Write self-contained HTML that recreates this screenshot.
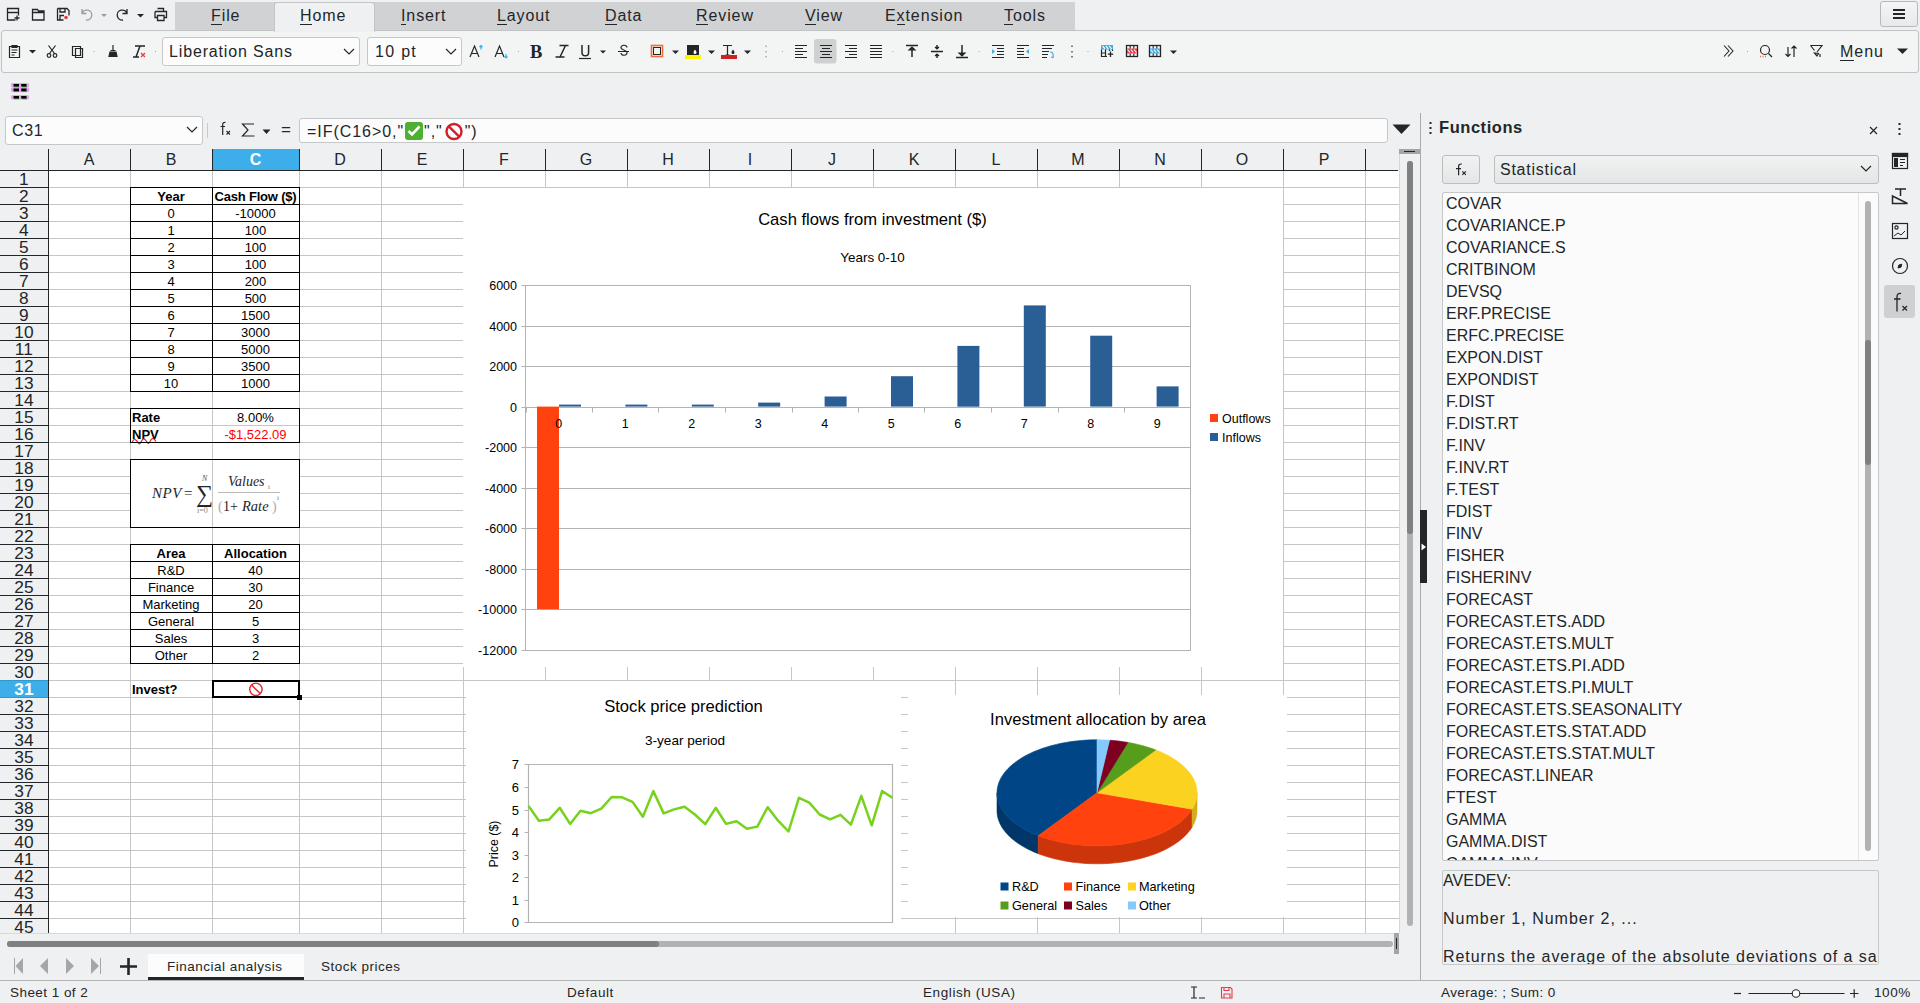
<!DOCTYPE html>
<html><head><meta charset="utf-8">
<style>
*{box-sizing:border-box}
html,body{margin:0;padding:0}
body{width:1920px;height:1003px;position:relative;overflow:hidden;background:#eff0f1;font-family:"Liberation Sans",sans-serif;color:#232629}
.a{position:absolute}
.ui{font-family:"Liberation Sans",sans-serif;font-size:16px;letter-spacing:0.6px;white-space:nowrap;line-height:1}
.ic{position:absolute;overflow:visible}
.tab{position:absolute;top:7.6px;font-size:16px;letter-spacing:0.9px;white-space:nowrap;line-height:1;color:#232629}
.tab u{text-decoration:none;border-bottom:1.5px solid #232629}
.rh{position:absolute;left:0;width:48px;height:17px;text-align:center;font-size:17.3px;letter-spacing:0.2px;line-height:17px;color:#232629}
.ch{position:absolute;top:149px;height:21px;text-align:center;font-size:16px;line-height:21px;color:#232629}
.c{position:absolute;height:17px;font-size:13px;line-height:1;white-space:nowrap;color:#000}
.fl{position:absolute;left:1445px;font-size:16px;letter-spacing:0.75px;white-space:nowrap;line-height:1;color:#232629}
</style></head><body>
<!-- quick access icons -->
<svg class="ic" style="left:0;top:0" width="175" height="30" viewBox="0 0 175 30" fill="none" stroke="#232629" stroke-width="1.3">
 <path d="M7.5 8.5h11v4h-11z M7.5 12.5v7.5h8 M18.5 12.5v3 M17 15.5v5 M14.5 18h5"/>
 <path d="M32.5 9.5h5l1 1.5h5.5v9h-11.5z M32.5 12.5h11.5"/>
 <path d="M57.5 8.5h9.5l2 2v5 M57.5 8.5v11.5h6 M60 8.5v3.5h5v-3.5 M60 19.5v-4h4"/>
 <circle cx="66" cy="17.5" r="1.8" fill="#e93a4a" stroke="none"/>
 <path d="M82 13.5a5 5 0 1 1 4 6.5 M82 9v4.5h4.5" stroke="#9a9a9a"/>
 <path d="M101 14l3 3 3-3z" fill="#9a9a9a" stroke="none"/>
 <path d="M127 13.5a5 5 0 1 0 -4 6.5 M127 9v4.5h-4.5"/>
 <path d="M137 14l3.5 3.5 3.5-3.5z" fill="#232629" stroke="none"/>
 <path d="M157.5 8.5h6v3 M155 11.5h11.5v6h-2 M155 11.5v6h2 M157.5 15.5h6.5v5h-6.5z"/>
</svg>
<!-- tabs band -->
<div class="a" style="left:175px;top:2px;width:900px;height:28px;background:#d1d2d4"></div>
<!-- toolbar box -->
<div class="a" style="left:1px;top:30px;width:1918px;height:43px;background:#f3f4f4;border:1px solid #c2c3c4;border-radius:3px"></div>
<div class="a" style="left:274px;top:2px;width:101px;height:30px;background:#eff0f1;border:1px solid #c4c5c6;border-bottom:none;border-radius:3px 3px 0 0"></div>
<div class="tab" style="left:211px"><u>F</u>ile</div>
<div class="tab" style="left:300px"><u>H</u>ome</div>
<div class="tab" style="left:401px"><u>I</u>nsert</div>
<div class="tab" style="left:497px"><u>L</u>ayout</div>
<div class="tab" style="left:605px"><u>D</u>ata</div>
<div class="tab" style="left:696px"><u>R</u>eview</div>
<div class="tab" style="left:805px"><u>V</u>iew</div>
<div class="tab" style="left:885px">E<u>x</u>tension</div>
<div class="tab" style="left:1004px"><u>T</u>ools</div>
<!-- hamburger -->
<div class="a" style="left:1880px;top:1px;width:38px;height:26px;border:1px solid #b8b9ba;border-radius:3px;background:linear-gradient(#f4f5f5,#e8e9ea)"></div>
<svg class="ic" style="left:1892px;top:8px" width="14" height="12"><path d="M1 2h12M1 6h12M1 10h12" stroke="#232629" stroke-width="1.8"/></svg>
<svg class="ic" style="left:0;top:30px" width="1920" height="42" viewBox="0 30 1920 42" fill="none" stroke="#232629" stroke-width="1.2">
 <!-- paste -->
 <path d="M9.5 46.5h10v11h-10z M12 45.5h5v2h-5z M11.5 50h6 M11.5 52.5h5 M11.5 55h3"/>
 <path d="M29 50l3.5 3.5 3.5-3.5z" fill="#232629" stroke="none"/>
 <!-- cut -->
 <path d="M48.5 45.5l6 8 M55.5 45.5l-6 8"/><circle cx="49" cy="55.5" r="1.8"/><circle cx="55" cy="55.5" r="1.8"/>
 <!-- copy -->
 <path d="M72.5 46.5h8v9h-8z M75.5 48.5h7v9h-7z" fill="#f3f4f4"/>
 <circle cx="94" cy="51.5" r="0.6" fill="#999" stroke="none"/>
 <!-- clone brush -->
 <path d="M113 45v5 M110.5 50.5h5 M110 52h6l1 4.5h-8z" fill="#232629"/>
 <!-- clear formatting -->
 <path d="M135 46h10 M140 46l-4 11 M133 57h6" stroke-width="1.5"/>
 <path d="M141 53l4 4 M145 53l-4 4" stroke="#e93a4a" stroke-width="1.3"/>
 <circle cx="155.5" cy="51.5" r="0.6" fill="#999" stroke="none"/>
 <!-- increase/decrease font -->
 <path d="M470 57l4.5-11 4.5 11 M472 53.5h5"/><path d="M481 45.5v4 M479.5 47l1.5-1.5 1.5 1.5" stroke="#3daee9"/>
 <path d="M495 57l4.5-11 4.5 11 M497 53.5h5"/><path d="M506 54v4 M504.5 56.5l1.5 1.5 1.5-1.5" stroke="#3daee9"/>
 <circle cx="518.5" cy="51.5" r="0.6" fill="#999" stroke="none"/>
 <!-- B I U S -->
 <text x="530" y="57.5" font-family="Liberation Serif" font-weight="bold" font-size="18.5" fill="#232629" stroke="none">B</text>
 <path d="M559.5 45.5h9 M555.5 57h9 M565.5 45.5l-5.5 11.5" stroke-width="1.5"/>
 <path d="M582 45v7.5a3.3 3.3 0 0 0 6.6 0v-7.5" stroke-width="1.5"/><path d="M579 58.5h12" stroke-width="1.2"/>
 <path d="M600 50.5l3 3 3-3z" fill="#232629" stroke="none"/>
 <path d="M618 51.5h11 M627 47.5a3 2.5 0 0 0 -6 0.5c0 2 6 2 6 4.5a3 2.5 0 0 1 -6 0.5"/>
 <!-- border -->
 <rect x="651.5" y="45.5" width="11" height="11" stroke="#f26b3a" stroke-width="1.6"/>
 <rect x="653.5" y="47.5" width="7" height="7" stroke="#232629" stroke-width="1"/>
 <path d="M672 50.5l3.5 3.5 3.5-3.5z" fill="#232629" stroke="none"/>
 <!-- bg color -->
 <rect x="687" y="45" width="12" height="10" fill="#232629" stroke="none"/>
 <path d="M695 49.5c-1 1.5-1.5 2.2-1.5 3a1.5 1.5 0 0 0 3 0c0-0.8-0.5-1.5-1.5-3z" fill="#fff" stroke="none"/>
 <rect x="685" y="55" width="16" height="4" fill="#fdf500" stroke="none"/>
 <path d="M708 50.5l3.5 3.5 3.5-3.5z" fill="#232629" stroke="none"/>
 <!-- font color -->
 <path d="M723 45.5h9 M727.5 45.5v9.5 M725.5 55h4"/>
 <path d="M733 49.5c-1 1.5-1.5 2.2-1.5 3a1.5 1.5 0 0 0 3 0c0-0.8-0.5-1.5-1.5-3z" fill="#232629" stroke="none"/>
 <rect x="721" y="55" width="16" height="4" fill="#d21f1f" stroke="none"/>
 <path d="M744 50.5l3.5 3.5 3.5-3.5z" fill="#232629" stroke="none"/>
 <path d="M766 45.5v1.5 M766 51v1.5 M766 56v1.5" stroke="#aaa" stroke-width="1.5"/>
 <circle cx="782.5" cy="51.5" r="0.6" fill="#999" stroke="none"/>
 <!-- align active bg -->
 <rect x="814" y="39" width="22.5" height="24.5" rx="3" fill="#cfd0d1" stroke="none"/>
 <path d="M795 45.5h12 M795 48.5h8 M795 51.5h12 M795 54.5h8 M795 57.5h12" stroke-width="1"/>
 <path d="M820 45.5h12 M822 48.5h8 M820 51.5h12 M822 54.5h8 M820 57.5h12" stroke-width="1"/>
 <path d="M845 45.5h12 M849 48.5h8 M845 51.5h12 M849 54.5h8 M845 57.5h12" stroke-width="1"/>
 <path d="M870 45.5h12 M870 48.5h12 M870 51.5h12 M870 54.5h12 M870 57.5h12" stroke-width="1"/>
 <circle cx="893" cy="51.5" r="0.6" fill="#999" stroke="none"/>
 <path d="M906 45.5h12 M912 48v9" stroke-width="1.5"/><path d="M909 50l3-3 3 3z" fill="#232629"/>
 <path d="M931 51.5h12 M937 45v4 M937 54v4" stroke-width="1.5"/><path d="M935 47l2 2 2-2 M935 56l2-2 2 2" fill="#232629"/>
 <path d="M956 57.5h12 M962 45v9" stroke-width="1.5"/><path d="M959 53l3 3 3-3z" fill="#232629"/>
 <circle cx="979" cy="51.5" r="0.6" fill="#999" stroke="none"/>
 <path d="M992 45.5h12 M997 48.5h7 M997 51.5h7 M997 54.5h7 M992 57.5h12" stroke-width="1"/><path d="M992 49l3 2.5-3 2.5z" fill="#3daee9" stroke="none"/>
 <path d="M1017 45.5h12 M1017 48.5h7 M1017 51.5h7 M1017 54.5h7 M1017 57.5h12" stroke-width="1"/><path d="M1029 49l-3 2.5 3 2.5z" fill="#3daee9" stroke="none"/>
 <path d="M1042 45.5h12 M1042 48.5h10 M1042 51.5h7 M1042 54.5h6 M1042 57.5h5" stroke-width="1"/><path d="M1050 52a3 3 0 0 1 3 4 M1051 57l2 0.5 0.5-2" stroke="#3daee9"/>
 <path d="M1072 45.5v1.5 M1072 51v1.5 M1072 56v1.5" stroke="#555" stroke-width="1.5"/>
 <circle cx="1088" cy="51.5" r="0.6" fill="#999" stroke="none"/>
 <!-- insert rows / delete rows / merge -->
 <rect x="1101" y="45" width="12" height="4.5" fill="#3daee9" stroke="none"/>
 <path d="M1102.5 45.8l2.5 3 M1105.8 45.8l2.5 3 M1109.1 45.8l2.5 3" stroke="#fff" stroke-width="1.1"/>
 <path d="M1101.5 49.5v7h5.5 M1101.5 53h4 M1105.5 49.5v7 M1109.5 49.5v1.5 M1112.5 49.5v1.5" stroke-width="1.2"/>
 <path d="M1107.8 54.2h5.4 M1110.5 51.5v5.4" stroke-width="1.3"/>
 <rect x="1126.5" y="45.5" width="11" height="11" stroke-width="1.3"/>
 <rect x="1127" y="48.5" width="10" height="5" fill="#e93a4a" stroke="none"/>
 <path d="M1127.5 49.5l2.5 3 M1130.8 49.5l2.5 3 M1134.1 49.5l2.5 3" stroke="#fff" stroke-width="1.1"/>
 <path d="M1130.2 45.5v3 M1133.8 45.5v3 M1130.2 53.5v3 M1133.8 53.5v3" stroke-width="1.1"/>
 <rect x="1149.5" y="45.5" width="11" height="11" stroke-width="1.3"/>
 <rect x="1150" y="48.5" width="10" height="5" fill="#3daee9" stroke="none"/>
 <path d="M1150.5 49.5l2.5 3 M1153.8 49.5l2.5 3 M1157.1 49.5l2.5 3" stroke="#fff" stroke-width="1.1"/>
 <path d="M1153.2 45.5v3 M1156.8 45.5v3 M1153.2 53.5v3 M1156.8 53.5v3" stroke-width="1.1"/>
 <path d="M1170 50.5l3.5 3.5 3.5-3.5z" fill="#232629" stroke="none"/>
 <!-- right side -->
 <path d="M1724 45.5l5 5.5-5 5.5 M1728 45.5l5 5.5-5 5.5" stroke-width="1.1"/>
 <circle cx="1747.5" cy="51.5" r="0.6" fill="#999" stroke="none"/>
 <circle cx="1765" cy="50" r="4.5"/><path d="M1768.5 53.5l3.5 3.5"/><path d="M1760 56.5h1 M1762.5 56.5h1 M1765 56.5h1" stroke="#f26b3a" stroke-width="1.3"/>
 <path d="M1788 47v9.5 M1785.5 54l2.5 2.5 2.5-2.5 M1794 57v-10.5 M1791.5 48.5l2.5-2.5 2.5 2.5"/>
 <path d="M1810.5 45.5h11.5l-5 6.5 M1810.5 45.5l4 5 M1814.5 53l2.5 3 1.5-2.5z M1820 54v3"/>
 <path d="M1897 48.5h11l-5.5 5.5z" fill="#232629" stroke="none"/>
</svg>
<!-- font name box -->
<div class="a" style="left:162px;top:37px;width:198px;height:29px;background:#fcfcfc;border:1px solid #c6c7c8;border-radius:3px"></div>
<div class="ui a" style="left:169px;top:44px;font-size:16px;letter-spacing:0.85px">Liberation Sans</div>
<svg class="ic" style="left:343px;top:48px" width="12" height="8"><path d="M1 1l5 5 5-5" fill="none" stroke="#232629" stroke-width="1.2"/></svg>
<div class="a" style="left:367px;top:37px;width:95px;height:29px;background:#fcfcfc;border:1px solid #c6c7c8;border-radius:3px"></div>
<div class="ui a" style="left:375px;top:44px;font-size:16px;letter-spacing:1.3px">10 pt</div>
<svg class="ic" style="left:445px;top:48px" width="12" height="8"><path d="M1 1l5 5 5-5" fill="none" stroke="#232629" stroke-width="1.2"/></svg>
<div class="ui a" style="left:1840px;top:44px;font-size:16px;letter-spacing:0.95px"><span style="border-bottom:1.5px solid #232629">M</span>enu</div>
<!-- sidebar toggle icon row -->
<svg class="ic" style="left:8px;top:78px" width="28" height="28" viewBox="8 78 28 28">
 <path d="M13 85.2h6.3 M21 85.2h6 M13 89.9h6.3 M21 89.9h6 M13 97.2h6.3 M21 97.2h6" stroke="#e7a0f0" stroke-width="4.6" stroke-linecap="round"/>
 <path d="M14 86.6h5 M22 86.6h5 M14 91.2h5 M22 91.2h5 M14 98.6h5 M22 98.6h5" stroke="#5cab5c" stroke-width="1.2"/>
 <path d="M13.5 85.2h5.5 M21.2 85.2h5.3 M13.5 89.9h5.5 M21.2 89.9h5.3 M13.5 97.2h5.5 M21.2 97.2h5.3" stroke="#000" stroke-width="2.6"/>
</svg>
<div class="a" style="left:5px;top:116px;width:198px;height:29px;background:#fcfcfc;border:1px solid #c6c7c8;border-radius:3px"></div>
<div class="ui a" style="left:12px;top:123px;letter-spacing:0.6px">C31</div>
<svg class="ic" style="left:186px;top:126px" width="12" height="8"><path d="M1 1l5 5 5-5" fill="none" stroke="#232629" stroke-width="1.2"/></svg>
<div class="a" style="left:207px;top:123px;width:1px;height:15px;background:#c8c9ca"></div>
<svg class="ic" style="left:218px;top:121px" width="16" height="16"><path d="M7.5 1.5c-1.8-0.3-2.8 0.4-2.8 2.2v10.3 M2.5 5.5h4.5" fill="none" stroke="#232629" stroke-width="1.2"/><path d="M8.5 10l3.5 3.5 M12 10l-3.5 3.5" stroke="#232629" stroke-width="1.1"/></svg>
<svg class="ic" style="left:241px;top:123px" width="15" height="14"><path d="M13 1H1.5l5.5 6-5.5 6H13.5" fill="none" stroke="#232629" stroke-width="1.2"/></svg>
<svg class="ic" style="left:262px;top:129px" width="9" height="6"><path d="M0.5 0.5h8l-4 4.5z" fill="#232629"/></svg>
<div class="a" style="left:281px;top:121px;font-size:17px;color:#232629;line-height:1">=</div>
<div class="a" style="left:299px;top:118px;width:1089px;height:25px;background:#fcfcfc;border:1px solid #c6c7c8;border-radius:3px"></div>
<div class="ui a" style="left:307px;top:122px;letter-spacing:0.95px">=IF(C16&gt;0,"<span style="display:inline-block;width:18px;height:18px;background:#4cb032;border-radius:3px;vertical-align:-3px;position:relative;margin:0 1px"><svg width="18" height="18" style="position:absolute;left:0;top:0"><path d="M3.5 9l3.5 3.5 7.5-8" fill="none" stroke="#fff" stroke-width="2.6"/></svg></span>","<svg width="20" height="19" style="vertical-align:-4px;margin:0 1px"><circle cx="10" cy="9.5" r="7.5" fill="none" stroke="#d0202a" stroke-width="2.4"/><path d="M4.8 4.3l10.4 10.4" stroke="#d0202a" stroke-width="2.4"/></svg>")</div>
<svg class="ic" style="left:1392px;top:124px" width="19" height="11"><path d="M0.5 0.5h18l-9 9.5z" fill="#232629"/></svg>

<div class="a" style="left:212px;top:149px;width:87px;height:21px;background:#3daee9"></div>
<div class="ch" style="left:48px;width:82px">A</div>
<div class="a" style="left:130px;top:149px;width:1px;height:21px;background:#232629"></div>
<div class="ch" style="left:130px;width:82px">B</div>
<div class="a" style="left:212px;top:149px;width:1px;height:21px;background:#232629"></div>
<div class="ch" style="left:212px;width:87px;color:#fff;font-weight:bold">C</div>
<div class="a" style="left:299px;top:149px;width:1px;height:21px;background:#232629"></div>
<div class="ch" style="left:299px;width:82px">D</div>
<div class="a" style="left:381px;top:149px;width:1px;height:21px;background:#232629"></div>
<div class="ch" style="left:381px;width:82px">E</div>
<div class="a" style="left:463px;top:149px;width:1px;height:21px;background:#232629"></div>
<div class="ch" style="left:463px;width:82px">F</div>
<div class="a" style="left:545px;top:149px;width:1px;height:21px;background:#232629"></div>
<div class="ch" style="left:545px;width:82px">G</div>
<div class="a" style="left:627px;top:149px;width:1px;height:21px;background:#232629"></div>
<div class="ch" style="left:627px;width:82px">H</div>
<div class="a" style="left:709px;top:149px;width:1px;height:21px;background:#232629"></div>
<div class="ch" style="left:709px;width:82px">I</div>
<div class="a" style="left:791px;top:149px;width:1px;height:21px;background:#232629"></div>
<div class="ch" style="left:791px;width:82px">J</div>
<div class="a" style="left:873px;top:149px;width:1px;height:21px;background:#232629"></div>
<div class="ch" style="left:873px;width:82px">K</div>
<div class="a" style="left:955px;top:149px;width:1px;height:21px;background:#232629"></div>
<div class="ch" style="left:955px;width:82px">L</div>
<div class="a" style="left:1037px;top:149px;width:1px;height:21px;background:#232629"></div>
<div class="ch" style="left:1037px;width:82px">M</div>
<div class="a" style="left:1119px;top:149px;width:1px;height:21px;background:#232629"></div>
<div class="ch" style="left:1119px;width:82px">N</div>
<div class="a" style="left:1201px;top:149px;width:1px;height:21px;background:#232629"></div>
<div class="ch" style="left:1201px;width:82px">O</div>
<div class="a" style="left:1283px;top:149px;width:1px;height:21px;background:#232629"></div>
<div class="ch" style="left:1283px;width:82px">P</div>
<div class="a" style="left:1365px;top:149px;width:1px;height:21px;background:#232629"></div>
<div class="a" style="left:48px;top:149px;width:1px;height:21px;background:#232629"></div>
<div class="a" style="left:0;top:170px;width:1398px;height:1px;background:#232629"></div>
<div class="a" style="left:49px;top:171px;width:1350px;height:762px;background:#fff"></div>
<div class="a" style="left:49px;top:171px;width:1350px;height:762px;background:repeating-linear-gradient(to bottom,transparent 0,transparent 16px,#c6c6c6 16px,#c6c6c6 17px)"></div>
<div class="a" style="left:130px;top:171px;width:1px;height:762px;background:#c6c6c6"></div>
<div class="a" style="left:212px;top:171px;width:1px;height:762px;background:#c6c6c6"></div>
<div class="a" style="left:299px;top:171px;width:1px;height:762px;background:#c6c6c6"></div>
<div class="a" style="left:381px;top:171px;width:1px;height:762px;background:#c6c6c6"></div>
<div class="a" style="left:463px;top:171px;width:1px;height:762px;background:#c6c6c6"></div>
<div class="a" style="left:545px;top:171px;width:1px;height:762px;background:#c6c6c6"></div>
<div class="a" style="left:627px;top:171px;width:1px;height:762px;background:#c6c6c6"></div>
<div class="a" style="left:709px;top:171px;width:1px;height:762px;background:#c6c6c6"></div>
<div class="a" style="left:791px;top:171px;width:1px;height:762px;background:#c6c6c6"></div>
<div class="a" style="left:873px;top:171px;width:1px;height:762px;background:#c6c6c6"></div>
<div class="a" style="left:955px;top:171px;width:1px;height:762px;background:#c6c6c6"></div>
<div class="a" style="left:1037px;top:171px;width:1px;height:762px;background:#c6c6c6"></div>
<div class="a" style="left:1119px;top:171px;width:1px;height:762px;background:#c6c6c6"></div>
<div class="a" style="left:1201px;top:171px;width:1px;height:762px;background:#c6c6c6"></div>
<div class="a" style="left:1283px;top:171px;width:1px;height:762px;background:#c6c6c6"></div>
<div class="a" style="left:1365px;top:171px;width:1px;height:762px;background:#c6c6c6"></div>
<div class="a" style="left:0;top:171px;width:48px;height:762px;background:repeating-linear-gradient(to bottom,#eff0f1 0,#eff0f1 16px,#232629 16px,#232629 17px)"></div>
<div class="a" style="left:0;top:680px;width:48px;height:18px;background:#3daee9;border-top:1px solid #3596cb;border-bottom:1px solid #3596cb"></div>
<div class="a" style="left:48px;top:171px;width:1px;height:762px;background:#232629"></div>
<div class="rh" style="top:171px">1</div>
<div class="rh" style="top:188px">2</div>
<div class="rh" style="top:205px">3</div>
<div class="rh" style="top:222px">4</div>
<div class="rh" style="top:239px">5</div>
<div class="rh" style="top:256px">6</div>
<div class="rh" style="top:273px">7</div>
<div class="rh" style="top:290px">8</div>
<div class="rh" style="top:307px">9</div>
<div class="rh" style="top:324px">10</div>
<div class="rh" style="top:341px">11</div>
<div class="rh" style="top:358px">12</div>
<div class="rh" style="top:375px">13</div>
<div class="rh" style="top:392px">14</div>
<div class="rh" style="top:409px">15</div>
<div class="rh" style="top:426px">16</div>
<div class="rh" style="top:443px">17</div>
<div class="rh" style="top:460px">18</div>
<div class="rh" style="top:477px">19</div>
<div class="rh" style="top:494px">20</div>
<div class="rh" style="top:511px">21</div>
<div class="rh" style="top:528px">22</div>
<div class="rh" style="top:545px">23</div>
<div class="rh" style="top:562px">24</div>
<div class="rh" style="top:579px">25</div>
<div class="rh" style="top:596px">26</div>
<div class="rh" style="top:613px">27</div>
<div class="rh" style="top:630px">28</div>
<div class="rh" style="top:647px">29</div>
<div class="rh" style="top:664px">30</div>
<div class="rh" style="top:681px;color:#fff;font-weight:bold">31</div>
<div class="rh" style="top:698px">32</div>
<div class="rh" style="top:715px">33</div>
<div class="rh" style="top:732px">34</div>
<div class="rh" style="top:749px">35</div>
<div class="rh" style="top:766px">36</div>
<div class="rh" style="top:783px">37</div>
<div class="rh" style="top:800px">38</div>
<div class="rh" style="top:817px">39</div>
<div class="rh" style="top:834px">40</div>
<div class="rh" style="top:851px">41</div>
<div class="rh" style="top:868px">42</div>
<div class="rh" style="top:885px">43</div>
<div class="rh" style="top:902px">44</div>
<div class="rh" style="top:919px">45</div>
<div class="a" style="left:0;top:933px;width:1399px;height:1px;background:#d8d9da"></div><div class="c" style="left:130px;width:82px;top:190px;text-align:center;font-weight:bold;color:#000;">Year</div>
<div class="c" style="left:212px;width:87px;top:190px;text-align:center;font-weight:bold;color:#000;letter-spacing:-0.2px">Cash Flow ($)</div>
<div class="c" style="left:130px;width:82px;top:207px;text-align:center;color:#000;">0</div>
<div class="c" style="left:212px;width:87px;top:207px;text-align:center;color:#000;">-10000</div>
<div class="c" style="left:130px;width:82px;top:224px;text-align:center;color:#000;">1</div>
<div class="c" style="left:212px;width:87px;top:224px;text-align:center;color:#000;">100</div>
<div class="c" style="left:130px;width:82px;top:241px;text-align:center;color:#000;">2</div>
<div class="c" style="left:212px;width:87px;top:241px;text-align:center;color:#000;">100</div>
<div class="c" style="left:130px;width:82px;top:258px;text-align:center;color:#000;">3</div>
<div class="c" style="left:212px;width:87px;top:258px;text-align:center;color:#000;">100</div>
<div class="c" style="left:130px;width:82px;top:275px;text-align:center;color:#000;">4</div>
<div class="c" style="left:212px;width:87px;top:275px;text-align:center;color:#000;">200</div>
<div class="c" style="left:130px;width:82px;top:292px;text-align:center;color:#000;">5</div>
<div class="c" style="left:212px;width:87px;top:292px;text-align:center;color:#000;">500</div>
<div class="c" style="left:130px;width:82px;top:309px;text-align:center;color:#000;">6</div>
<div class="c" style="left:212px;width:87px;top:309px;text-align:center;color:#000;">1500</div>
<div class="c" style="left:130px;width:82px;top:326px;text-align:center;color:#000;">7</div>
<div class="c" style="left:212px;width:87px;top:326px;text-align:center;color:#000;">3000</div>
<div class="c" style="left:130px;width:82px;top:343px;text-align:center;color:#000;">8</div>
<div class="c" style="left:212px;width:87px;top:343px;text-align:center;color:#000;">5000</div>
<div class="c" style="left:130px;width:82px;top:360px;text-align:center;color:#000;">9</div>
<div class="c" style="left:212px;width:87px;top:360px;text-align:center;color:#000;">3500</div>
<div class="c" style="left:130px;width:82px;top:377px;text-align:center;color:#000;">10</div>
<div class="c" style="left:212px;width:87px;top:377px;text-align:center;color:#000;">1000</div>
<div class="a" style="left:130px;top:187px;width:170px;height:1px;background:#000"></div>
<div class="a" style="left:130px;top:204px;width:170px;height:1px;background:#000"></div>
<div class="a" style="left:130px;top:221px;width:170px;height:1px;background:#000"></div>
<div class="a" style="left:130px;top:238px;width:170px;height:1px;background:#000"></div>
<div class="a" style="left:130px;top:255px;width:170px;height:1px;background:#000"></div>
<div class="a" style="left:130px;top:272px;width:170px;height:1px;background:#000"></div>
<div class="a" style="left:130px;top:289px;width:170px;height:1px;background:#000"></div>
<div class="a" style="left:130px;top:306px;width:170px;height:1px;background:#000"></div>
<div class="a" style="left:130px;top:323px;width:170px;height:1px;background:#000"></div>
<div class="a" style="left:130px;top:340px;width:170px;height:1px;background:#000"></div>
<div class="a" style="left:130px;top:357px;width:170px;height:1px;background:#000"></div>
<div class="a" style="left:130px;top:374px;width:170px;height:1px;background:#000"></div>
<div class="a" style="left:130px;top:391px;width:170px;height:1px;background:#000"></div>
<div class="a" style="left:130px;top:187px;width:1px;height:205px;background:#000"></div>
<div class="a" style="left:212px;top:187px;width:1px;height:205px;background:#000"></div>
<div class="a" style="left:299px;top:187px;width:1px;height:205px;background:#000"></div>
<div class="c" style="left:132px;top:411px;font-weight:bold;color:#000;">Rate</div>
<div class="c" style="left:212px;width:87px;top:411px;text-align:center;color:#000;">8.00%</div>
<div class="c" style="left:132px;top:428px;font-weight:bold;color:#000;">NPV</div>
<div class="c" style="left:212px;width:87px;top:428px;text-align:center;color:#ff0000;">-$1,522.09</div>
<svg class="ic" style="left:131px;top:438px" width="28" height="6"><path d="M1 4.5q1.5 -3.5 3 -3q1.5 0.5 3 3q1.5 3 3 -0.5q1.5 -3.5 3 -3q1.5 0.5 3 3q1.5 3 3 -0.5q1.5 -3.5 3 -3q1.5 0.5 3 3" fill="none" stroke="#e81818" stroke-width="1.1"/></svg>
<div class="a" style="left:130px;top:408px;width:170px;height:1px;background:#000"></div>
<div class="a" style="left:130px;top:442px;width:170px;height:1px;background:#000"></div>
<div class="a" style="left:130px;top:408px;width:1px;height:35px;background:#000"></div>
<div class="a" style="left:299px;top:408px;width:1px;height:35px;background:#000"></div>
<div class="a" style="left:130px;top:459px;width:170px;height:1px;background:#000"></div>
<div class="a" style="left:130px;top:527px;width:170px;height:1px;background:#000"></div>
<div class="a" style="left:130px;top:459px;width:1px;height:69px;background:#000"></div>
<div class="a" style="left:299px;top:459px;width:1px;height:69px;background:#000"></div>
<div class="a" style="left:131px;top:460px;width:168px;height:67px;background:#fff"></div>
<div class="a" style="left:212px;top:460px;width:1px;height:67px;background:#c6c6c6"></div>
<svg class="ic" style="left:131px;top:460px" width="168" height="67" viewBox="131 460 168 67" font-family="Liberation Serif" fill="#232629">
<text x="152" y="498" font-size="15" font-style="italic" letter-spacing="0.5">NPV</text>
<text x="184" y="498" font-size="15">=</text>
<text x="196" y="502" font-size="24">&#8721;</text>
<text x="202" y="481" font-size="8" font-style="italic" fill="#555">N</text>
<text x="197" y="513" font-size="8" fill="#888">i=0</text>
<text x="228" y="486" font-size="14" font-style="italic">Values</text>
<text x="268" y="489" font-size="7" fill="#777">i</text>
<rect x="218" y="492" width="62" height="1" fill="#bbb"/>
<text x="218" y="511" font-size="14" fill="#aaa">(</text>
<text x="223" y="511" font-size="14">1+</text>
<text x="242" y="511" font-size="14.5" font-style="italic">Rate</text>
<text x="272" y="511" font-size="14" fill="#aaa">)</text>
<text x="277" y="500" font-size="7" fill="#777">i</text>
</svg>
<div class="c" style="left:130px;width:82px;top:547px;text-align:center;font-weight:bold;color:#000;">Area</div>
<div class="c" style="left:212px;width:87px;top:547px;text-align:center;font-weight:bold;color:#000;">Allocation</div>
<div class="c" style="left:130px;width:82px;top:564px;text-align:center;color:#000;">R&amp;D</div>
<div class="c" style="left:212px;width:87px;top:564px;text-align:center;color:#000;">40</div>
<div class="c" style="left:130px;width:82px;top:581px;text-align:center;color:#000;">Finance</div>
<div class="c" style="left:212px;width:87px;top:581px;text-align:center;color:#000;">30</div>
<div class="c" style="left:130px;width:82px;top:598px;text-align:center;color:#000;">Marketing</div>
<div class="c" style="left:212px;width:87px;top:598px;text-align:center;color:#000;">20</div>
<div class="c" style="left:130px;width:82px;top:615px;text-align:center;color:#000;">General</div>
<div class="c" style="left:212px;width:87px;top:615px;text-align:center;color:#000;">5</div>
<div class="c" style="left:130px;width:82px;top:632px;text-align:center;color:#000;">Sales</div>
<div class="c" style="left:212px;width:87px;top:632px;text-align:center;color:#000;">3</div>
<div class="c" style="left:130px;width:82px;top:649px;text-align:center;color:#000;">Other</div>
<div class="c" style="left:212px;width:87px;top:649px;text-align:center;color:#000;">2</div>
<div class="a" style="left:130px;top:544px;width:170px;height:1px;background:#000"></div>
<div class="a" style="left:130px;top:561px;width:170px;height:1px;background:#000"></div>
<div class="a" style="left:130px;top:578px;width:170px;height:1px;background:#000"></div>
<div class="a" style="left:130px;top:595px;width:170px;height:1px;background:#000"></div>
<div class="a" style="left:130px;top:612px;width:170px;height:1px;background:#000"></div>
<div class="a" style="left:130px;top:629px;width:170px;height:1px;background:#000"></div>
<div class="a" style="left:130px;top:646px;width:170px;height:1px;background:#000"></div>
<div class="a" style="left:130px;top:663px;width:170px;height:1px;background:#000"></div>
<div class="a" style="left:130px;top:544px;width:1px;height:120px;background:#000"></div>
<div class="a" style="left:212px;top:544px;width:1px;height:120px;background:#000"></div>
<div class="a" style="left:299px;top:544px;width:1px;height:120px;background:#000"></div>
<div class="c" style="left:132px;top:683px;font-weight:bold;color:#000;">Invest?</div>
<svg class="ic" style="left:248px;top:681px" width="16" height="16"><circle cx="7.9" cy="8.3" r="6.2" fill="none" stroke="#e4262c" stroke-width="1.4"/><path d="M3.6 4l8.6 8.6" stroke="#e4262c" stroke-width="1.4"/></svg>
<div class="a" style="left:212px;top:680px;width:88px;height:18px;border:2px solid #000"></div>
<div class="a" style="left:297px;top:695px;width:5px;height:5px;background:#000"></div><div class="a" style="left:463px;top:188px;width:820px;height:479px;background:#fff"></div>
<div class="a" style="left:466px;top:681px;width:435px;height:252px;background:#fff"></div>
<div class="a" style="left:908px;top:695px;width:379px;height:222px;background:#fff"></div>
<svg class="ic" style="left:0;top:0" width="1920" height="1003" viewBox="0 0 1920 1003" font-family="Liberation Sans">
<text x="872.5" y="224.5" font-size="16.6" text-anchor="middle" fill="#000">Cash flows from investment ($)</text>
<text x="872.5" y="261.5" font-size="13.4" text-anchor="middle" fill="#000">Years 0-10</text>
<path d="M521.5 285.5H1190.5" stroke="#b3b3b3" stroke-width="1"/>
<text x="517" y="290.0" font-size="12.5" text-anchor="end" fill="#000">6000</text>
<path d="M521.5 326.5H1190.5" stroke="#b3b3b3" stroke-width="1"/>
<text x="517" y="331.0" font-size="12.5" text-anchor="end" fill="#000">4000</text>
<path d="M521.5 366.5H1190.5" stroke="#b3b3b3" stroke-width="1"/>
<text x="517" y="371.0" font-size="12.5" text-anchor="end" fill="#000">2000</text>
<path d="M521.5 407.5H1190.5" stroke="#b3b3b3" stroke-width="1"/>
<text x="517" y="412.0" font-size="12.5" text-anchor="end" fill="#000">0</text>
<path d="M521.5 447.5H1190.5" stroke="#b3b3b3" stroke-width="1"/>
<text x="517" y="452.0" font-size="12.5" text-anchor="end" fill="#000">-2000</text>
<path d="M521.5 488.5H1190.5" stroke="#b3b3b3" stroke-width="1"/>
<text x="517" y="493.0" font-size="12.5" text-anchor="end" fill="#000">-4000</text>
<path d="M521.5 528.5H1190.5" stroke="#b3b3b3" stroke-width="1"/>
<text x="517" y="533.0" font-size="12.5" text-anchor="end" fill="#000">-6000</text>
<path d="M521.5 569.5H1190.5" stroke="#b3b3b3" stroke-width="1"/>
<text x="517" y="574.0" font-size="12.5" text-anchor="end" fill="#000">-8000</text>
<path d="M521.5 609.5H1190.5" stroke="#b3b3b3" stroke-width="1"/>
<text x="517" y="614.0" font-size="12.5" text-anchor="end" fill="#000">-10000</text>
<path d="M521.5 650.5H1190.5" stroke="#b3b3b3" stroke-width="1"/>
<text x="517" y="655.0" font-size="12.5" text-anchor="end" fill="#000">-12000</text>
<path d="M525.5 285.5V650.5H1190.5V285.5z" fill="none" stroke="#b3b3b3" stroke-width="1"/>
<path d="M526.5 407.5V412.5" stroke="#b3b3b3"/>
<path d="M592.5 407.5V412.5" stroke="#b3b3b3"/>
<path d="M658.5 407.5V412.5" stroke="#b3b3b3"/>
<path d="M725.5 407.5V412.5" stroke="#b3b3b3"/>
<path d="M792.5 407.5V412.5" stroke="#b3b3b3"/>
<path d="M858.5 407.5V412.5" stroke="#b3b3b3"/>
<path d="M924.5 407.5V412.5" stroke="#b3b3b3"/>
<path d="M991.5 407.5V412.5" stroke="#b3b3b3"/>
<path d="M1058.5 407.5V412.5" stroke="#b3b3b3"/>
<path d="M1124.5 407.5V412.5" stroke="#b3b3b3"/>
<path d="M1190.5 407.5V412.5" stroke="#b3b3b3"/>
<rect x="537" y="406.6" width="22" height="202.5" fill="#ff420e"/>
<rect x="559.0" y="404.6" width="22" height="2.0" fill="#2a5f96"/>
<rect x="625.4" y="404.6" width="22" height="2.0" fill="#2a5f96"/>
<rect x="691.8" y="404.6" width="22" height="2.0" fill="#2a5f96"/>
<rect x="758.2" y="402.6" width="22" height="4.0" fill="#2a5f96"/>
<rect x="824.6" y="396.5" width="22" height="10.1" fill="#2a5f96"/>
<rect x="891.0" y="376.2" width="22" height="30.4" fill="#2a5f96"/>
<rect x="957.4" y="345.9" width="22" height="60.8" fill="#2a5f96"/>
<rect x="1023.8" y="305.4" width="22" height="101.2" fill="#2a5f96"/>
<rect x="1090.2" y="335.7" width="22" height="70.9" fill="#2a5f96"/>
<rect x="1156.6" y="386.4" width="22" height="20.2" fill="#2a5f96"/>
<text x="558.8" y="428" font-size="12.5" text-anchor="middle" fill="#000">0</text>
<text x="625.2" y="428" font-size="12.5" text-anchor="middle" fill="#000">1</text>
<text x="691.8" y="428" font-size="12.5" text-anchor="middle" fill="#000">2</text>
<text x="758.2" y="428" font-size="12.5" text-anchor="middle" fill="#000">3</text>
<text x="824.8" y="428" font-size="12.5" text-anchor="middle" fill="#000">4</text>
<text x="891.2" y="428" font-size="12.5" text-anchor="middle" fill="#000">5</text>
<text x="957.8" y="428" font-size="12.5" text-anchor="middle" fill="#000">6</text>
<text x="1024.2" y="428" font-size="12.5" text-anchor="middle" fill="#000">7</text>
<text x="1090.8" y="428" font-size="12.5" text-anchor="middle" fill="#000">8</text>
<text x="1157.2" y="428" font-size="12.5" text-anchor="middle" fill="#000">9</text>
<rect x="1210" y="414" width="8" height="8" fill="#ff420e"/><text x="1222" y="423" font-size="12.5" fill="#000">Outflows</text>
<rect x="1210" y="433" width="8" height="8" fill="#2a5f96"/><text x="1222" y="442" font-size="12.5" fill="#000">Inflows</text>
</svg>
<svg class="ic" style="left:0;top:0" width="1920" height="1003" viewBox="0 0 1920 1003" font-family="Liberation Sans">
<text x="683.5" y="711.5" font-size="16.6" text-anchor="middle" fill="#000">Stock price prediction</text>
<text x="685" y="744.5" font-size="13.6" text-anchor="middle" fill="#000">3-year period</text>
<path d="M524.5 922.5H528.5" stroke="#b3b3b3"/>
<text x="519" y="927.0" font-size="13" text-anchor="end" fill="#000">0</text>
<path d="M524.5 900.5H528.5" stroke="#b3b3b3"/>
<text x="519" y="905.0" font-size="13" text-anchor="end" fill="#000">1</text>
<path d="M524.5 877.5H528.5" stroke="#b3b3b3"/>
<text x="519" y="882.0" font-size="13" text-anchor="end" fill="#000">2</text>
<path d="M524.5 855.5H528.5" stroke="#b3b3b3"/>
<text x="519" y="860.0" font-size="13" text-anchor="end" fill="#000">3</text>
<path d="M524.5 832.5H528.5" stroke="#b3b3b3"/>
<text x="519" y="837.0" font-size="13" text-anchor="end" fill="#000">4</text>
<path d="M524.5 810.5H528.5" stroke="#b3b3b3"/>
<text x="519" y="815.0" font-size="13" text-anchor="end" fill="#000">5</text>
<path d="M524.5 787.5H528.5" stroke="#b3b3b3"/>
<text x="519" y="792.0" font-size="13" text-anchor="end" fill="#000">6</text>
<path d="M524.5 764.5H528.5" stroke="#b3b3b3"/>
<text x="519" y="769.0" font-size="13" text-anchor="end" fill="#000">7</text>
<path d="M528.5 764.5V922.5H892.5V764.5z" fill="none" stroke="#b3b3b3" stroke-width="1.2"/>
<text transform="translate(498 844) rotate(-90)" font-size="12.4" text-anchor="middle" fill="#000">Price ($)</text>
<polyline points="528.5,805.9 538.9,820.7 549.3,819.4 559.7,807.8 570.1,823.9 580.5,810.7 590.9,813.2 601.3,808.6 611.7,797.0 622.1,797.3 632.5,801.9 642.9,816.7 653.3,791.1 663.7,813.4 674.1,809.4 684.5,806.7 694.9,814.5 705.3,824.2 715.7,807.8 726.1,823.9 736.5,821.2 746.9,828.8 757.3,826.6 767.7,807.2 778.1,820.7 788.5,831.5 798.9,797.8 809.3,802.7 819.7,814.5 830.1,819.4 840.5,814.8 850.9,824.7 861.3,795.9 871.7,825.3 882.1,791.1 892.5,797.8" fill="none" stroke="#76d21b" stroke-width="2.5" stroke-linejoin="round"/>
</svg>
<svg class="ic" style="left:0;top:0" width="1920" height="1003" viewBox="0 0 1920 1003" font-family="Liberation Sans">
<text x="1098" y="725" font-size="16.6" text-anchor="middle" fill="#000">Investment allocation by area</text>
<polygon points="997.00,792.80 997.05,794.46 997.20,796.13 997.44,797.79 997.79,799.44 998.23,801.09 998.77,802.73 999.41,804.36 1000.14,805.98 1000.97,807.59 1001.89,809.18 1002.91,810.75 1004.02,812.31 1005.22,813.85 1006.52,815.37 1007.90,816.86 1009.37,818.33 1010.93,819.78 1012.57,821.20 1014.29,822.59 1016.10,823.95 1017.98,825.28 1019.95,826.58 1021.99,827.85 1024.10,829.08 1026.29,830.28 1028.55,831.44 1030.87,832.56 1033.26,833.64 1035.71,834.68 1038.22,835.68 1038.22,853.68 1035.71,852.68 1033.26,851.64 1030.87,850.56 1028.55,849.44 1026.29,848.28 1024.10,847.08 1021.99,845.85 1019.95,844.58 1017.98,843.28 1016.10,841.95 1014.29,840.59 1012.57,839.20 1010.93,837.78 1009.37,836.33 1007.90,834.86 1006.52,833.37 1005.22,831.85 1004.02,830.31 1002.91,828.75 1001.89,827.18 1000.97,825.59 1000.14,823.98 999.41,822.36 998.77,820.73 998.23,819.09 997.79,817.44 997.44,815.79 997.20,814.13 997.05,812.46 997.00,810.80" fill="#003768" stroke="#003768" stroke-width="0.6"/>
<polygon points="1038.22,835.68 1043.42,837.55 1048.82,839.24 1054.42,840.76 1060.19,842.08 1066.10,843.21 1072.13,844.13 1078.26,844.86 1084.47,845.38 1090.72,845.70 1097.00,845.80 1103.28,845.70 1109.53,845.38 1115.74,844.86 1121.87,844.13 1127.90,843.21 1133.81,842.08 1139.58,840.76 1145.18,839.24 1150.58,837.55 1155.78,835.68 1160.74,833.64 1165.45,831.44 1169.90,829.08 1174.05,826.58 1177.90,823.95 1181.43,821.20 1184.63,818.33 1187.48,815.37 1189.98,812.31 1192.11,809.18 1192.11,827.18 1189.98,830.31 1187.48,833.37 1184.63,836.33 1181.43,839.20 1177.90,841.95 1174.05,844.58 1169.90,847.08 1165.45,849.44 1160.74,851.64 1155.78,853.68 1150.58,855.55 1145.18,857.24 1139.58,858.76 1133.81,860.08 1127.90,861.21 1121.87,862.13 1115.74,862.86 1109.53,863.38 1103.28,863.70 1097.00,863.80 1090.72,863.70 1084.47,863.38 1078.26,862.86 1072.13,862.13 1066.10,861.21 1060.19,860.08 1054.42,858.76 1048.82,857.24 1043.42,855.55 1038.22,853.68" fill="#cc350b" stroke="#cc350b" stroke-width="0.6"/>
<polygon points="1192.11,809.18 1192.42,808.65 1192.73,808.12 1193.03,807.59 1193.32,807.05 1193.59,806.52 1193.86,805.98 1194.11,805.44 1194.36,804.90 1194.59,804.36 1194.81,803.82 1195.03,803.28 1195.23,802.73 1195.42,802.19 1195.60,801.64 1195.77,801.09 1195.93,800.54 1196.07,799.99 1196.21,799.44 1196.34,798.89 1196.45,798.34 1196.56,797.79 1196.65,797.23 1196.73,796.68 1196.80,796.13 1196.86,795.57 1196.91,795.02 1196.95,794.46 1196.98,793.91 1196.99,793.36 1197.00,792.80 1197.00,810.80 1196.99,811.36 1196.98,811.91 1196.95,812.46 1196.91,813.02 1196.86,813.57 1196.80,814.13 1196.73,814.68 1196.65,815.23 1196.56,815.79 1196.45,816.34 1196.34,816.89 1196.21,817.44 1196.07,817.99 1195.93,818.54 1195.77,819.09 1195.60,819.64 1195.42,820.19 1195.23,820.73 1195.03,821.28 1194.81,821.82 1194.59,822.36 1194.36,822.90 1194.11,823.44 1193.86,823.98 1193.59,824.52 1193.32,825.05 1193.03,825.59 1192.73,826.12 1192.42,826.65 1192.11,827.18" fill="#d2ae1b" stroke="#d2ae1b" stroke-width="0.6"/>
<polygon points="1097,792.8 1097.00,739.80 1091.77,739.87 1086.55,740.09 1081.36,740.45 1076.21,740.96 1071.12,741.61 1066.10,742.39 1061.16,743.32 1056.33,744.38 1051.60,745.58 1047.00,746.90 1042.54,748.35 1038.22,749.92 1034.07,751.61 1030.09,753.41 1026.29,755.32 1022.69,757.34 1019.29,759.45 1016.10,761.65 1013.13,763.93 1010.40,766.30 1007.90,768.74 1005.65,771.24 1003.64,773.81 1001.89,776.42 1000.41,779.08 999.19,781.78 998.23,784.51 997.55,787.26 997.14,790.03 997.00,792.80 997.14,795.57 997.55,798.34 998.23,801.09 999.19,803.82 1000.41,806.52 1001.89,809.18 1003.64,811.79 1005.65,814.36 1007.90,816.86 1010.40,819.30 1013.13,821.67 1016.10,823.95 1019.29,826.15 1022.69,828.26 1026.29,830.28 1030.09,832.19 1034.07,833.99 1038.22,835.68" fill="#004586" stroke="#004586" stroke-width="0.6"/>
<polygon points="1097,792.8 1038.22,835.68 1042.54,837.25 1047.00,838.70 1051.60,840.02 1056.33,841.22 1061.16,842.28 1066.10,843.21 1071.12,843.99 1076.21,844.64 1081.36,845.15 1086.55,845.51 1091.77,845.73 1097.00,845.80 1102.23,845.73 1107.45,845.51 1112.64,845.15 1117.79,844.64 1122.88,843.99 1127.90,843.21 1132.84,842.28 1137.67,841.22 1142.40,840.02 1147.00,838.70 1151.46,837.25 1155.78,835.68 1159.93,833.99 1163.91,832.19 1167.71,830.28 1171.31,828.26 1174.71,826.15 1177.90,823.95 1180.87,821.67 1183.60,819.30 1186.10,816.86 1188.35,814.36 1190.36,811.79 1192.11,809.18" fill="#ff420e" stroke="#ff420e" stroke-width="0.6"/>
<polygon points="1097,792.8 1192.11,809.18 1193.59,806.52 1194.81,803.82 1195.77,801.09 1196.45,798.34 1196.86,795.57 1197.00,792.80 1196.86,790.03 1196.45,787.26 1195.77,784.51 1194.81,781.78 1193.59,779.08 1192.11,776.42 1190.36,773.81 1188.35,771.24 1186.10,768.74 1183.60,766.30 1180.87,763.93 1177.90,761.65 1174.71,759.45 1171.31,757.34 1167.71,755.32 1163.91,753.41 1159.93,751.61 1155.78,749.92" fill="#fcd221" stroke="#fcd221" stroke-width="0.6"/>
<polygon points="1097,792.8 1155.78,749.92 1151.46,748.35 1147.00,746.90 1142.40,745.58 1137.67,744.38 1132.84,743.32 1127.90,742.39" fill="#579d1c" stroke="#579d1c" stroke-width="0.6"/>
<polygon points="1097,792.8 1127.90,742.39 1123.39,741.68 1118.81,741.08 1114.19,740.59 1109.53,740.22" fill="#7e0021" stroke="#7e0021" stroke-width="0.6"/>
<polygon points="1097,792.8 1109.53,740.22 1106.41,740.04 1103.28,739.90 1100.14,739.83 1097.00,739.80" fill="#83caff" stroke="#83caff" stroke-width="0.6"/>
<rect x="1000.5" y="882.5" width="8" height="8" fill="#004586"/><text x="1012" y="891.0" font-size="12.7" fill="#000">R&amp;D</text>
<rect x="1064" y="882.5" width="8" height="8" fill="#ff420e"/><text x="1075.5" y="891.0" font-size="12.7" fill="#000">Finance</text>
<rect x="1128" y="882.5" width="8" height="8" fill="#ffd320"/><text x="1139" y="891.0" font-size="12.7" fill="#000">Marketing</text>
<rect x="1000.5" y="901.5" width="8" height="8" fill="#579d1c"/><text x="1012" y="910.0" font-size="12.7" fill="#000">General</text>
<rect x="1064" y="901.5" width="8" height="8" fill="#7e0021"/><text x="1075.5" y="910.0" font-size="12.7" fill="#000">Sales</text>
<rect x="1128" y="901.5" width="8" height="8" fill="#83caff"/><text x="1139" y="910.0" font-size="12.7" fill="#000">Other</text>
</svg><div class="a" style="left:1399px;top:149px;width:21px;height:5px;background:#a3a4a5"></div>
<div class="a" style="left:1404px;top:151px;width:11px;height:1px;background:#232629"></div>
<div class="a" style="left:1399px;top:154px;width:1px;height:779px;background:#d5d6d7"></div>
<div class="a" style="left:1407px;top:161px;width:6px;height:765px;background:#b1b2b3;border-radius:3px"></div>
<div class="a" style="left:1407px;top:161px;width:6px;height:373px;background:#7f8082;border-radius:3px"></div>
<div class="a" style="left:7px;top:941px;width:1386px;height:6px;background:#b1b2b3;border-radius:3px"></div>
<div class="a" style="left:7px;top:941px;width:652px;height:6px;background:#7f8082;border-radius:3px"></div>
<div class="a" style="left:1394px;top:933px;width:5px;height:21px;background:#a3a4a5"></div>
<div class="a" style="left:1396px;top:938px;width:1px;height:11px;background:#232629"></div>
<div class="a" style="left:1420px;top:113px;width:1px;height:868px;background:#a9aaab"></div>
<div class="a" style="left:1420px;top:510px;width:7px;height:73px;background:#232629"></div>
<svg class="ic" style="left:1421px;top:543px" width="6" height="8"><path d="M0.5 0.5l4.5 3.5-4.5 3.5z" fill="#fff"/></svg>
<svg class="ic" style="left:1429px;top:121px" width="4" height="15"><path d="M1.5 1v2 M1.5 6v2 M1.5 11v2" stroke="#232629" stroke-width="2"/></svg>
<div class="a" style="left:1439px;top:119px;font-size:16.5px;font-weight:bold;letter-spacing:0.55px;line-height:1;color:#232629">Functions</div>
<svg class="ic" style="left:1869px;top:126px" width="9" height="9"><path d="M1 1l7 7M8 1l-7 7" stroke="#232629" stroke-width="1.2"/></svg>
<svg class="ic" style="left:1898px;top:122px" width="4" height="15"><path d="M1.5 1v2 M1.5 6v2 M1.5 11v2" stroke="#232629" stroke-width="2"/></svg>
<div class="a" style="left:1442px;top:155px;width:38px;height:29px;background:linear-gradient(#f1f2f2,#e4e5e6);border:1px solid #bcbdbe;border-radius:3px"></div>
<svg class="ic" style="left:1453px;top:161px" width="16" height="16"><path d="M5.6 14.2V5.2q0-2.2 2.4-2.2h0.8 M3 7.6h5" fill="none" stroke="#232629" stroke-width="1.2"/><path d="M9.3 10.3l3.6 3.6 M12.9 10.3l-3.6 3.6" stroke="#232629" stroke-width="1.1"/></svg>
<div class="a" style="left:1494px;top:155px;width:385px;height:29px;background:linear-gradient(#f1f2f2,#e4e5e6);border:1px solid #bcbdbe;border-radius:3px"></div>
<div class="ui a" style="left:1500px;top:162px;font-size:16px;letter-spacing:0.75px">Statistical</div>
<svg class="ic" style="left:1860px;top:165px" width="12" height="8"><path d="M1 1l5 5 5-5" fill="none" stroke="#232629" stroke-width="1.2"/></svg>
<div class="a" style="left:1442px;top:192px;width:437px;height:669px;background:#fbfbfb;border:1px solid #c6c7c8;border-radius:2px;overflow:hidden">
<div class="a" style="left:3px;top:3px;font-size:16px;letter-spacing:0px;line-height:1;white-space:nowrap;color:#232629">COVAR</div>
<div class="a" style="left:3px;top:25px;font-size:16px;letter-spacing:0px;line-height:1;white-space:nowrap;color:#232629">COVARIANCE.P</div>
<div class="a" style="left:3px;top:47px;font-size:16px;letter-spacing:0px;line-height:1;white-space:nowrap;color:#232629">COVARIANCE.S</div>
<div class="a" style="left:3px;top:69px;font-size:16px;letter-spacing:0px;line-height:1;white-space:nowrap;color:#232629">CRITBINOM</div>
<div class="a" style="left:3px;top:91px;font-size:16px;letter-spacing:0px;line-height:1;white-space:nowrap;color:#232629">DEVSQ</div>
<div class="a" style="left:3px;top:113px;font-size:16px;letter-spacing:0px;line-height:1;white-space:nowrap;color:#232629">ERF.PRECISE</div>
<div class="a" style="left:3px;top:135px;font-size:16px;letter-spacing:0px;line-height:1;white-space:nowrap;color:#232629">ERFC.PRECISE</div>
<div class="a" style="left:3px;top:157px;font-size:16px;letter-spacing:0px;line-height:1;white-space:nowrap;color:#232629">EXPON.DIST</div>
<div class="a" style="left:3px;top:179px;font-size:16px;letter-spacing:0px;line-height:1;white-space:nowrap;color:#232629">EXPONDIST</div>
<div class="a" style="left:3px;top:201px;font-size:16px;letter-spacing:0px;line-height:1;white-space:nowrap;color:#232629">F.DIST</div>
<div class="a" style="left:3px;top:223px;font-size:16px;letter-spacing:0px;line-height:1;white-space:nowrap;color:#232629">F.DIST.RT</div>
<div class="a" style="left:3px;top:245px;font-size:16px;letter-spacing:0px;line-height:1;white-space:nowrap;color:#232629">F.INV</div>
<div class="a" style="left:3px;top:267px;font-size:16px;letter-spacing:0px;line-height:1;white-space:nowrap;color:#232629">F.INV.RT</div>
<div class="a" style="left:3px;top:289px;font-size:16px;letter-spacing:0px;line-height:1;white-space:nowrap;color:#232629">F.TEST</div>
<div class="a" style="left:3px;top:311px;font-size:16px;letter-spacing:0px;line-height:1;white-space:nowrap;color:#232629">FDIST</div>
<div class="a" style="left:3px;top:333px;font-size:16px;letter-spacing:0px;line-height:1;white-space:nowrap;color:#232629">FINV</div>
<div class="a" style="left:3px;top:355px;font-size:16px;letter-spacing:0px;line-height:1;white-space:nowrap;color:#232629">FISHER</div>
<div class="a" style="left:3px;top:377px;font-size:16px;letter-spacing:0px;line-height:1;white-space:nowrap;color:#232629">FISHERINV</div>
<div class="a" style="left:3px;top:399px;font-size:16px;letter-spacing:0px;line-height:1;white-space:nowrap;color:#232629">FORECAST</div>
<div class="a" style="left:3px;top:421px;font-size:16px;letter-spacing:0px;line-height:1;white-space:nowrap;color:#232629">FORECAST.ETS.ADD</div>
<div class="a" style="left:3px;top:443px;font-size:16px;letter-spacing:0px;line-height:1;white-space:nowrap;color:#232629">FORECAST.ETS.MULT</div>
<div class="a" style="left:3px;top:465px;font-size:16px;letter-spacing:0px;line-height:1;white-space:nowrap;color:#232629">FORECAST.ETS.PI.ADD</div>
<div class="a" style="left:3px;top:487px;font-size:16px;letter-spacing:0px;line-height:1;white-space:nowrap;color:#232629">FORECAST.ETS.PI.MULT</div>
<div class="a" style="left:3px;top:509px;font-size:16px;letter-spacing:0px;line-height:1;white-space:nowrap;color:#232629">FORECAST.ETS.SEASONALITY</div>
<div class="a" style="left:3px;top:531px;font-size:16px;letter-spacing:0px;line-height:1;white-space:nowrap;color:#232629">FORECAST.ETS.STAT.ADD</div>
<div class="a" style="left:3px;top:553px;font-size:16px;letter-spacing:0px;line-height:1;white-space:nowrap;color:#232629">FORECAST.ETS.STAT.MULT</div>
<div class="a" style="left:3px;top:575px;font-size:16px;letter-spacing:0px;line-height:1;white-space:nowrap;color:#232629">FORECAST.LINEAR</div>
<div class="a" style="left:3px;top:597px;font-size:16px;letter-spacing:0px;line-height:1;white-space:nowrap;color:#232629">FTEST</div>
<div class="a" style="left:3px;top:619px;font-size:16px;letter-spacing:0px;line-height:1;white-space:nowrap;color:#232629">GAMMA</div>
<div class="a" style="left:3px;top:641px;font-size:16px;letter-spacing:0px;line-height:1;white-space:nowrap;color:#232629">GAMMA.DIST</div>
<div class="a" style="left:3px;top:663px;font-size:16px;letter-spacing:0px;line-height:1;white-space:nowrap;color:#232629">GAMMA.INV</div>
<div class="a" style="left:415px;top:0;width:1px;height:669px;background:#e3e4e5"></div>
<div class="a" style="left:422px;top:8px;width:6px;height:650px;background:#b1b2b3;border-radius:3px"></div>
<div class="a" style="left:422px;top:147px;width:6px;height:125px;background:#7f8082;border-radius:3px"></div>
</div>
<div class="a" style="left:1442px;top:870px;width:437px;height:95px;background:#eff0f1;border:1px solid #c6c7c8;border-radius:2px;overflow:hidden">
<div class="a" style="left:0px;top:2px;font-size:16px;letter-spacing:0.1px;line-height:1;white-space:nowrap;color:#232629">AVEDEV:</div>
<div class="a" style="left:0px;top:40px;font-size:16px;letter-spacing:1.0px;line-height:1;white-space:nowrap;color:#232629">Number 1, Number 2, ...</div>
<div class="a" style="left:0px;top:78px;font-size:16px;letter-spacing:0.95px;line-height:1;white-space:nowrap;color:#232629">Returns the average of the absolute deviations of a sample</div>
</div>
<svg class="ic" style="left:1880px;top:150px" width="40" height="172" viewBox="1880 150 40 172" fill="none" stroke="#232629" stroke-width="1.2">
<rect x="1892.5" y="153.5" width="15" height="15"/><rect x="1892.5" y="153.5" width="15" height="3" fill="#232629"/><rect x="1894" y="158" width="4" height="9" fill="#232629" stroke="none"/><path d="M1900 159.5h5 M1900 162.5h5 M1900 165.5h3" stroke-width="1"/>
<path d="M1895 189h11 M1900.5 189v7 M1892.5 196v7.5h15z" stroke-width="1.5"/>
<rect x="1892.5" y="223.5" width="15" height="15"/><circle cx="1896.5" cy="227.5" r="1.6"/><path d="M1894 236l4-3 3 2 4-4" stroke-width="1"/>
<circle cx="1900" cy="266" r="7.5"/><path d="M1898 268l0.8-3 3-0.8-0.8 3z" fill="#232629" stroke-width="1"/>
<rect x="1884" y="285" width="31" height="33" rx="3" fill="#cfd0d1" stroke="none"/>
</svg>
<svg class="ic" style="left:1890px;top:292px" width="22" height="22"><path d="M11 1.5c-2.5-0.4-4 0.5-4 3v15 M4 7h6.5" fill="none" stroke="#232629" stroke-width="1.3"/><path d="M12.5 14l4.5 4.5 M17 14l-4.5 4.5" stroke="#232629" stroke-width="1.2"/></svg>
<svg class="ic" style="left:0;top:950px" width="145" height="30" viewBox="0 950 145 30">
<path d="M14.5 958v16" stroke="#a5a6a7" stroke-width="1"/><path d="M23 958v16l-7.5-8z" fill="#a5a6a7"/>
<path d="M48 958v16l-8-8z" fill="#a5a6a7"/>
<path d="M66 958v16l8-8z" fill="#a5a6a7"/>
<path d="M91 958v16l8-8z" fill="#a5a6a7"/><path d="M100.5 958v16" stroke="#a5a6a7" stroke-width="1"/>
<path d="M120 966.5h17 M128.5 958v17" stroke="#232629" stroke-width="2.6"/>
</svg>
<div class="a" style="left:148px;top:954px;width:156px;height:26px;background:#fcfcfc"></div>
<div class="a" style="left:148px;top:977px;width:156px;height:3px;background:#232629"></div>
<div class="a" style="left:167px;top:960px;font-size:13.5px;letter-spacing:0.5px;line-height:1;white-space:nowrap;color:#232629">Financial analysis</div>
<div class="a" style="left:321px;top:960px;font-size:13.5px;letter-spacing:0.5px;line-height:1;white-space:nowrap;color:#232629">Stock prices</div>
<div class="a" style="left:0;top:980px;width:1920px;height:1px;background:#b3b4b5"></div>
<div class="a" style="left:10px;top:986px;font-size:13.5px;letter-spacing:0.45px;line-height:1;white-space:nowrap;color:#232629">Sheet 1 of 2</div>
<div class="a" style="left:567px;top:986px;font-size:13.5px;letter-spacing:0.6px;line-height:1;white-space:nowrap;color:#232629">Default</div>
<div class="a" style="left:923px;top:986px;font-size:13.5px;letter-spacing:0.6px;line-height:1;white-space:nowrap;color:#232629">English (USA)</div>
<div class="a" style="left:1441px;top:986px;font-size:13.5px;letter-spacing:0.4px;line-height:1;white-space:nowrap;color:#232629">Average: ; Sum: 0</div>
<div class="a" style="left:1874px;top:986px;font-size:13.5px;letter-spacing:0.6px;line-height:1;white-space:nowrap;color:#232629">100%</div>
<svg class="ic" style="left:1180px;top:981px" width="740" height="22" viewBox="1180 981 740 22" fill="none" stroke="#232629">
<path d="M1191 987h6 M1194 987v11 M1191 998h6 M1199 998h6" stroke-width="1.2"/>
<path d="M1221.5 987.5h9l1.5 1.5v9h-10.5z M1224 987.5v3h5v-3 M1224 997.5v-3.5h6v3.5" stroke="#e93a4a" stroke-width="1.1"/>
<path d="M1734 993.5h7" stroke-width="1.2"/>
<path d="M1748.5 993.5h96" stroke-width="1.2"/>
<circle cx="1796" cy="993.5" r="3.8" fill="#fcfcfc" stroke-width="1.1"/>
<path d="M1850 993.5h8.5 M1854.2 989.2v8.5" stroke-width="1.2"/>
</svg></body></html>
